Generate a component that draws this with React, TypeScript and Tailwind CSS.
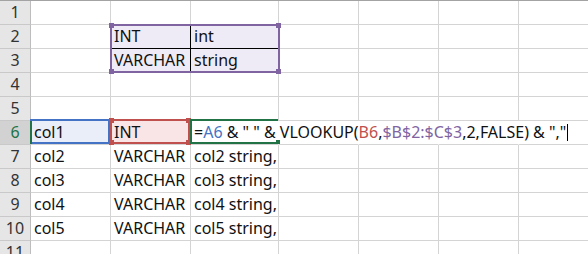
import React from "react";

const COLS = [80, 80, 88, 80, 80, 80, 80];

type Cell = { text?: React.ReactNode; cls?: string; overlay?: React.ReactNode };

const PURPLE = "bg-[#8064a2]";
const RED = "bg-[#c0504d]";

function Corners({ color }: { color: string }) {
  return (
    <>
      <span className={`absolute -left-[3px] -top-[3px] w-[5px] h-[5px] ${color}`} />
      <span className={`absolute -right-[3px] -top-[3px] w-[5px] h-[5px] ${color}`} />
      <span className={`absolute -left-[3px] -bottom-[3px] w-[5px] h-[5px] ${color}`} />
      <span className={`absolute -right-[3px] -bottom-[3px] w-[5px] h-[5px] ${color}`} />
    </>
  );
}

function rowData(r: number): Cell[] {
  const lav = "bg-[#efebf6]";
  switch (r) {
    case 2:
      return [
        {},
        {
          text: "INT",
          cls: `${lav} !border-r-black !border-b-black`,
          overlay: (
            <div className="absolute -left-[1px] -top-[1px] w-[170px] h-[49px] border-2 border-[#8064a2] z-20">
              <Corners color={PURPLE} />
            </div>
          ),
        },
        { text: "int", cls: `${lav} !border-b-black` },
      ];
    case 3:
      return [{}, { text: "VARCHAR", cls: `${lav} !border-r-black` }, { text: "string", cls: lav }];
    case 6:
      return [
        {
          text: "col1",
          cls: "bg-[#e9eef8]",
          overlay: <div className="absolute -left-[1px] -top-[2px] right-0 bottom-0 border-2 border-[#4472c4] z-20" />,
        },
        {
          text: "INT",
          cls: "bg-[#f9e5e6]",
          overlay: (
            <div className="absolute -left-[1px] -top-[2px] right-0 bottom-0 border-2 border-[#c0504d] z-20">
              <Corners color={RED} />
            </div>
          ),
        },
        {
          text: (
            <span className="relative z-10 whitespace-nowrap">
              =<span className="text-[#4472c4]">A6</span> &amp; &quot; &quot; &amp; VLOOKUP(
              <span className="text-[#c0504d]">B6</span>,
              <span className="text-[#8064a2]">$B$2:$C$3</span>,2,FALSE) &amp; &quot;,&quot;
              <span className="inline-block w-[1px] h-[17px] bg-black align-[-3px] ml-[1px]" />
            </span>
          ),
          cls: "!border-r-white",
          overlay: (
            <div className="absolute -left-[1px] -top-[2px] right-0 bottom-0 border-2 border-r-0 border-[#217346] z-20">
              <span className="absolute -right-[2px] -bottom-[2px] w-[4px] h-[4px] bg-[#217346]" />
            </div>
          ),
        },
        { cls: "!border-r-white" },
        { cls: "!border-r-white" },
        { cls: "!border-r-white" },
        { cls: "!border-r-white" },
      ];
    case 7:
    case 8:
    case 9:
    case 10: {
      const n = r - 5;
      return [{ text: `col${n}` }, { text: "VARCHAR" }, { text: `col${n} string,` }];
    }
    default:
      return [];
  }
}

export default function App() {
  const rows = Array.from({ length: 11 }, (_, i) => i + 1);
  return (
    <div
      className="w-[588px] h-[254px] overflow-hidden bg-white text-[16px] text-[#111]"
      style={{ fontFamily: "'Noto Sans', sans-serif" }}
    >
      <div className="border-t border-[#a3a3a3] flex flex-col">
        {rows.map((r) => {
          const data = rowData(r);
          const sel = r === 6;
          return (
            <div key={r} className="flex h-[24px] shrink-0">
              <div
                className={`relative w-[31px] shrink-0 border-r border-b border-r-[#bdbdbd] border-b-[#c9c9c9] text-center leading-[23px] ${
                  sel ? "bg-[#d2d2d2] text-[#217346]" : "bg-[#e6e6e6] text-[#333]"
                }`}
              >
                {r}
                {sel && <span className="absolute -right-[2px] top-0 bottom-0 w-[2px] bg-[#217346] z-30" />}
              </div>
              {COLS.map((w, c) => {
                const cell = data[c] || {};
                return (
                  <div
                    key={c}
                    className={`relative shrink-0 border-r border-b border-[#d4d4d4] pl-[3px] leading-[23px] whitespace-nowrap ${cell.cls || ""}`}
                    style={{ width: w }}
                  >
                    {cell.text}
                    {cell.overlay}
                  </div>
                );
              })}
            </div>
          );
        })}
      </div>
    </div>
  );
}
